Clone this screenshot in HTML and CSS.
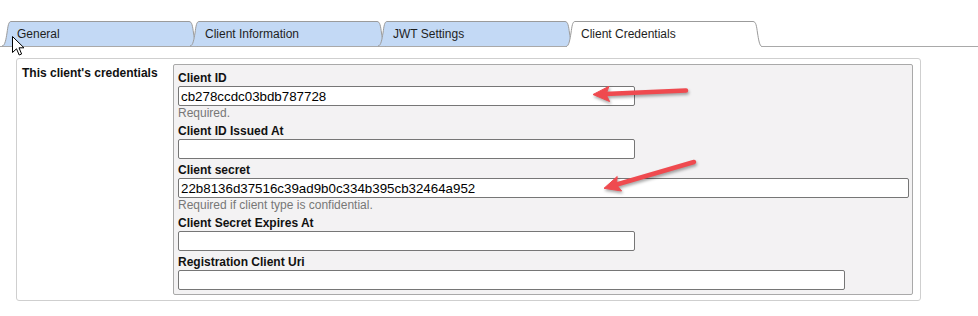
FILE: index.html
```html
<!DOCTYPE html>
<html>
<head>
<meta charset="utf-8">
<link rel="stylesheet" href="styles.css">
</head>
<body>
<div class="page">
  <div class="tabs">
    <div class="tab">
      <svg class="tab-bg" width="196" height="26" viewBox="0 0 196 26"><path class="fill" d="M0,25 C3,25 4,18 5,12 C6,5 6.5,0.5 9,0.5 L187,0.5 C190,0.5 190.5,5 191.5,12 C192.5,18 193.5,25 196,25 Z"/><path class="edge" d="M0,25 C3,25 4,18 5,12 C6,5 6.5,0.5 9,0.5 L187,0.5 C190,0.5 190.5,5 191.5,12 C192.5,18 193.5,25 196,25"/></svg>
      <span class="tab-label">General</span>
    </div>
    <div class="tab">
      <svg class="tab-bg" width="196" height="26" viewBox="0 0 196 26"><path class="fill" d="M0,25 C3,25 4,18 5,12 C6,5 6.5,0.5 9,0.5 L187,0.5 C190,0.5 190.5,5 191.5,12 C192.5,18 193.5,25 196,25 Z"/><path class="edge" d="M0,25 C3,25 4,18 5,12 C6,5 6.5,0.5 9,0.5 L187,0.5 C190,0.5 190.5,5 191.5,12 C192.5,18 193.5,25 196,25"/></svg>
      <span class="tab-label">Client Information</span>
    </div>
    <div class="tab">
      <svg class="tab-bg" width="196" height="26" viewBox="0 0 196 26"><path class="fill" d="M0,25 C3,25 4,18 5,12 C6,5 6.5,0.5 9,0.5 L187,0.5 C190,0.5 190.5,5 191.5,12 C192.5,18 193.5,25 196,25 Z"/><path class="edge" d="M0,25 C3,25 4,18 5,12 C6,5 6.5,0.5 9,0.5 L187,0.5 C190,0.5 190.5,5 191.5,12 C192.5,18 193.5,25 196,25"/></svg>
      <span class="tab-label">JWT Settings</span>
    </div>
    <div class="tab tab-active">
      <svg class="tab-bg" width="196" height="26" viewBox="0 0 196 26"><path class="fill" d="M0,26 L0,25.5 C3,25.5 4,18 5,12 C6,5 6.5,0.5 9,0.5 L187,0.5 C190,0.5 190.5,5 191.5,12 C192.5,18 193.5,25.5 196,25.5 L196,26 Z"/><path class="edge" d="M0,25.5 C3,25.5 4,18 5,12 C6,5 6.5,0.5 9,0.5 L187,0.5 C190,0.5 190.5,5 191.5,12 C192.5,18 193.5,25.5 196,25.5"/></svg>
      <span class="tab-label">Client Credentials</span>
    </div>
  </div>

  <div class="panel">
    <div class="panel-label">This client's credentials</div>
    <div class="fields">
      <div class="field">
        <div class="field-label">Client ID</div>
        <input class="input input-md" type="text" value="cb278ccdc03bdb787728">
        <div class="help">Required.</div>
      </div>
      <div class="field">
        <div class="field-label">Client ID Issued At</div>
        <input class="input input-md" type="text" value="">
      </div>
      <div class="field">
        <div class="field-label">Client secret</div>
        <input class="input input-xl" type="text" value="22b8136d37516c39ad9b0c334b395cb32464a952">
        <div class="help">Required if client type is confidential.</div>
      </div>
      <div class="field">
        <div class="field-label">Client Secret Expires At</div>
        <input class="input input-md" type="text" value="">
      </div>
      <div class="field">
        <div class="field-label">Registration Client Uri</div>
        <input class="input input-lg" type="text" value="">
      </div>
    </div>
  </div>

  <svg class="annotations" width="978" height="316" viewBox="0 0 978 316">
    <g class="arrow">
      <line x1="686" y1="90.5" x2="605" y2="94" />
      <polygon points="593,94.5 609,86.3 606,94.2 609.6,101.5" />
    </g>
    <g class="arrow">
      <line x1="694" y1="162" x2="615" y2="185" />
      <polygon points="604,188.3 617.2,176.5 616.5,184.6 621.6,191" />
    </g>
  </svg>

  <svg class="cursor" width="14" height="20" viewBox="0 0 14 20">
    <path d="M0.5,0.5 L0.5,16.5 L4.5,12.8 L7.2,19 L9.6,18 L7,11.8 L12,11.8 Z" />
  </svg>
</div>
</body>
</html>
```
FILE: styles.css
```css
* { box-sizing: border-box; }

html, body {
  margin: 0;
  padding: 0;
  background: #ffffff;
}

body {
  font-family: "Liberation Sans", Arial, sans-serif;
  font-size: 12px;
  color: #111;
}

.page {
  position: relative;
  width: 978px;
  height: 316px;
  padding-top: 21px;
}

.tabs {
  display: flex;
  align-items: flex-start;
  height: 26px;
  border-bottom: 1px solid #a9a9a9;
  padding-left: 2px;
}

.tab {
  position: relative;
  flex: 0 0 196px;
  width: 196px;
  height: 25px;
  margin-right: -8px;
  line-height: 25px;
  padding-left: 15px;
  padding-top: 1px;
  color: #1e1e1e;
  white-space: nowrap;
}

.tab-active {
  height: 26px;
}

.tab-bg {
  position: absolute;
  left: 0;
  top: 0;
  display: block;
}

.tab-bg .fill {
  fill: #c3d9f5;
  stroke: none;
}

.tab-active .tab-bg .fill {
  fill: #ffffff;
}

.tab-bg .edge {
  fill: none;
  stroke: #9b9b9b;
  stroke-width: 1;
}

.tab-label {
  position: relative;
}

.panel {
  display: flex;
  align-items: flex-start;
  width: 905px;
  margin: 11px 0 0 16px;
  padding: 5px 7px 5px 5px;
  border: 1px solid #cfcfcf;
  border-radius: 3px;
}

.panel-label {
  flex: 0 0 151px;
  font-weight: bold;
  line-height: 16px;
  padding-top: 1px;
  color: #111;
}

.fields {
  flex: 0 0 740px;
  width: 740px;
  padding: 5px 3px 1px 4px;
  background: #f3f2f3;
  border: 1px solid #a9a9a9;
  border-radius: 2px;
}

.field {
  display: flex;
  flex-direction: column;
  align-items: flex-start;
  margin-bottom: 3px;
}

.field-label {
  font-weight: bold;
  line-height: 16px;
  color: #111;
}

.input {
  display: block;
  height: 20px;
  margin: 0;
  padding: 1px 2px;
  font-family: "Liberation Sans", Arial, sans-serif;
  font-size: 13.333px;
  color: #000;
  background: #ffffff;
  border: 1px solid #767676;
  border-radius: 2px;
  outline: none;
}

.input-md { width: 457px; }
.input-lg { width: 667px; }
.input-xl { width: 731px; }

.help {
  line-height: 14px;
  color: #777;
}

.annotations {
  position: absolute;
  left: 0;
  top: 0;
  pointer-events: none;
  filter: drop-shadow(1px 2px 1.5px rgba(0, 0, 0, 0.35));
}

.arrow line {
  stroke: #ef4a4f;
  stroke-width: 4.5;
  stroke-linecap: round;
}

.arrow polygon {
  fill: #ef4a4f;
  stroke: #ef4a4f;
  stroke-width: 1;
  stroke-linejoin: round;
}

.cursor {
  position: absolute;
  left: 12px;
  top: 36px;
  pointer-events: none;
}

.cursor path {
  fill: #ffffff;
  stroke: #000000;
  stroke-width: 1;
  stroke-linejoin: miter;
}
```
